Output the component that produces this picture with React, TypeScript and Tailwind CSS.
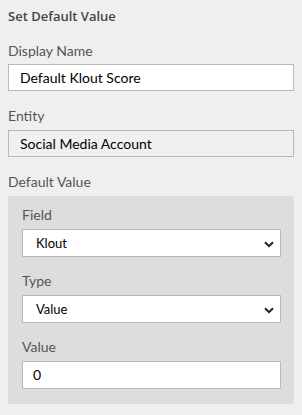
import React from "react";

const Chevron = () => (
  <svg width="10" height="7" viewBox="0 0 10 7" className="absolute right-[6px] top-[11px]">
    <path d="M1 1.2 L5 5.2 L9 1.2" stroke="#222" strokeWidth="2" fill="none" />
  </svg>
);

export default function App() {
  const font = { fontFamily: 'Lato, "Open Sans", sans-serif' };
  return (
    <div className="w-[302px] h-[415px] bg-[#efefef] px-2" style={font}>
      <div
        className="pt-[7px] h-[25px] text-[13px] leading-[18px] font-semibold text-[#444]"
        style={{ fontFamily: '"Open Sans", sans-serif' }}
      >
        Set Default Value
      </div>
      <div className="mt-[16px] text-[14px] leading-[20px] text-[#555]">Display Name</div>
      <div className="mt-[3px] h-[27px] border border-[#b9b9b9] bg-white pl-[11px] text-[14px] leading-[25px] text-[#000]">
        Default Klout Score
      </div>
      <div className="mt-[15px] text-[14px] leading-[20px] text-[#555]">Entity</div>
      <div className="mt-[4px] h-[27px] border border-[#b9b9b9] bg-[#f0f0f0] pl-[11px] text-[14px] leading-[25px] text-[#000]">
        Social Media Account
      </div>
      <div className="mt-[15px] text-[14px] leading-[20px] text-[#555]">Default Value</div>
      <div className="mt-[4px] bg-[#dddddd] pl-[14px] pr-[13px] pt-[9px] pb-[15px]">
        <div className="text-[14px] leading-[20px] text-[#555]">Field</div>
        <div className="relative mt-[4px] h-[28px] border border-[#b9b9b9] bg-white pl-[13px] text-[13px] leading-[26px] text-[#000]">
          Klout
          <Chevron />
        </div>
        <div className="mt-[14px] text-[14px] leading-[20px] text-[#555]">Type</div>
        <div className="relative mt-[4px] h-[28px] border border-[#b9b9b9] bg-white pl-[13px] text-[13px] leading-[26px] text-[#000]">
          Value
          <Chevron />
        </div>
        <div className="mt-[14px] text-[14px] leading-[20px] text-[#555]">Value</div>
        <div className="mt-[4px] h-[28px] border border-[#b9b9b9] bg-white pl-[10px] text-[14px] leading-[26px] text-[#000]">
          0
        </div>
      </div>
    </div>
  );
}
